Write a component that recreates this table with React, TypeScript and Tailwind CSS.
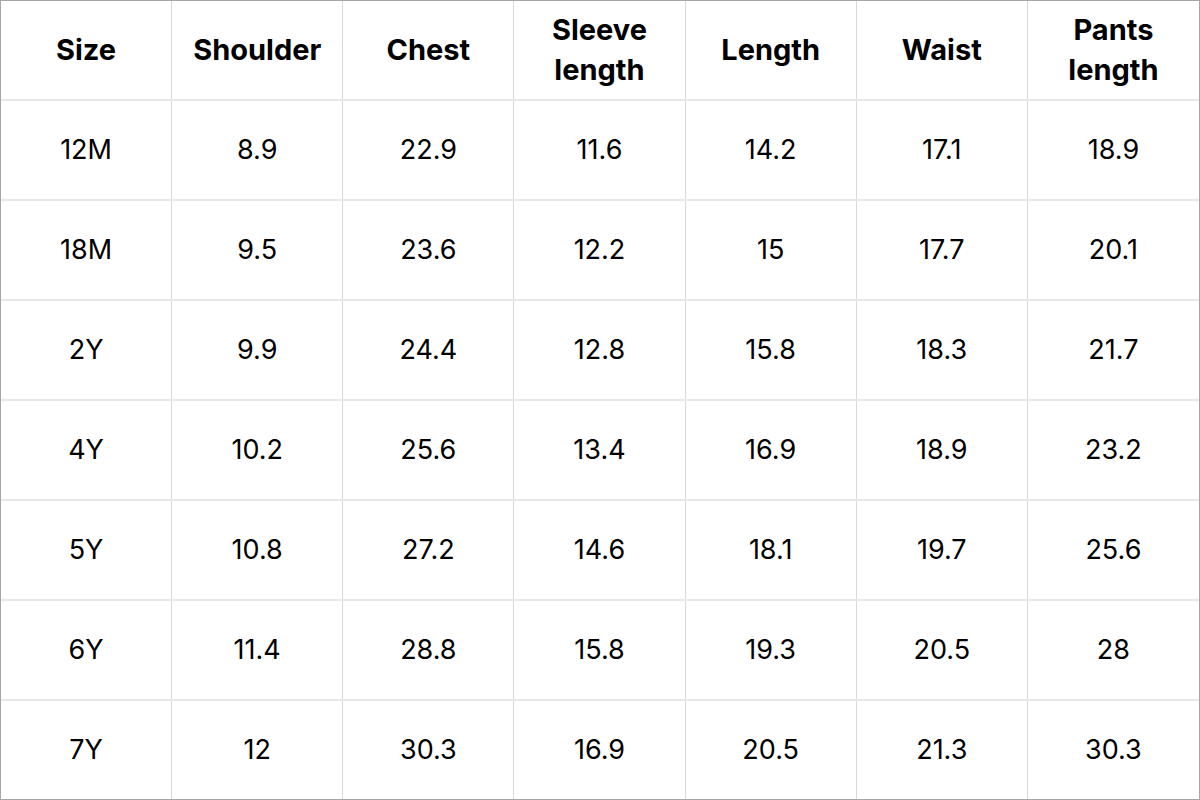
const headers = ["Size", "Shoulder", "Chest", "Sleeve length", "Length", "Waist", "Pants length"];

const rows = [
  ["12M", "8.9", "22.9", "11.6", "14.2", "17.1", "18.9"],
  ["18M", "9.5", "23.6", "12.2", "15", "17.7", "20.1"],
  ["2Y", "9.9", "24.4", "12.8", "15.8", "18.3", "21.7"],
  ["4Y", "10.2", "25.6", "13.4", "16.9", "18.9", "23.2"],
  ["5Y", "10.8", "27.2", "14.6", "18.1", "19.7", "25.6"],
  ["6Y", "11.4", "28.8", "15.8", "19.3", "20.5", "28"],
  ["7Y", "12", "30.3", "16.9", "20.5", "21.3", "30.3"],
];

export default function App() {
  return (
    <div
      className="w-[1200px] h-[800px] bg-white border border-[#a6a6a6] flex flex-col text-black"
      style={{ fontFamily: "Inter, 'Open Sans', sans-serif" }}
    >
      <div className="grid grid-cols-7 h-[100px] border-b-2 border-[#e8e8e8]">
        {headers.map((h, i) => (
          <div
            key={h}
            className={`flex items-center justify-center text-center px-5 text-[29px] leading-[40px] font-bold ${
              i < 6 ? "border-r border-[#d9d9d9]" : ""
            }`}
          >
            {h}
          </div>
        ))}
      </div>
      {rows.map((row, r) => (
        <div
          key={row[0]}
          className={`grid grid-cols-7 ${r < rows.length - 1 ? "h-[100px] border-b-2 border-[#e8e8e8]" : "flex-1"}`}
        >
          {row.map((v, i) => (
            <div
              key={i}
              className={`flex items-center justify-center text-[27px] ${i < 6 ? "border-r border-[#d9d9d9]" : ""}`}
            >
              {v}
            </div>
          ))}
        </div>
      ))}
    </div>
  );
}
